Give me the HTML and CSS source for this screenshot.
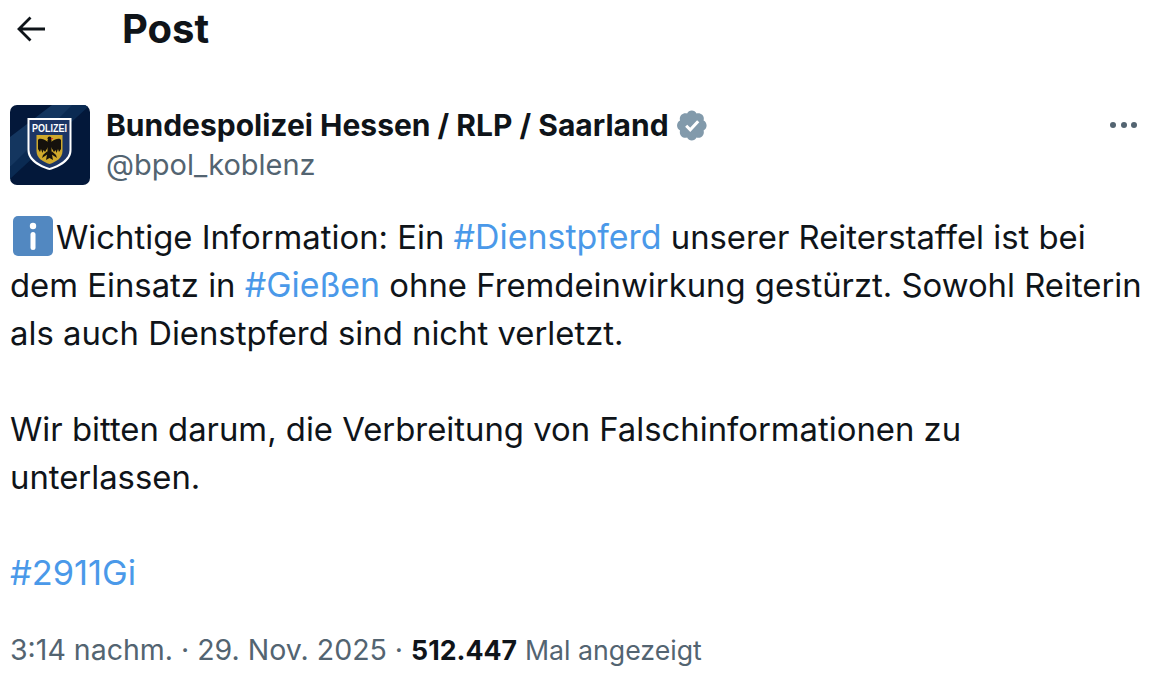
FILE: index.html
```html
<!DOCTYPE html>
<html lang="de">
<head>
<meta charset="utf-8">
<title>Post</title>
<link rel="stylesheet" href="styles.css">
</head>
<body>
<main class="page">
  <header class="topbar">
    <svg class="back" viewBox="0 0 32 32" width="32" height="32"><path d="M30 16H3.500M15.500 4.500 4 16 15.500 27.500" fill="none" stroke="#0f1419" stroke-width="2.800"/></svg>
    <h1 class="title">Post</h1>
  </header>
  <section class="author">
    <svg class="avatar" viewBox="0 0 80 80" width="80" height="80">
      <defs><clipPath id="clip"><rect width="80" height="80" rx="7"/></clipPath></defs>
      <g clip-path="url(#clip)">
        <rect width="80" height="80" fill="#03183a"/>
        <path d="M0 32 42 0H80L0 62Z" fill="#14365f"/>
        <path d="M62 0h18L0 74V62Z" fill="#0a2a52"/>
        <path d="M17.500 13H61.500V45C61.500 56 50 62 39.500 65 29 62 17.500 56 17.500 45Z" fill="#fff"/>
        <path d="M19.500 15H59.500V45C59.500 54 49 60 39.500 63 30 60 19.500 54 19.500 45Z" fill="#1c3565"/>
        <text class="badge" x="39.500" y="27" text-anchor="middle" textLength="35" lengthAdjust="spacingAndGlyphs">POLIZEI</text>
        <path d="M26.500 30H52.500V46C52.500 53 46 57 39.500 59 33 57 26.500 53 26.500 46Z" fill="#cfa92c"/>
        <g fill="#15110c">
          <circle cx="39.500" cy="33.500" r="2"/>
          <rect x="37.500" y="35" width="4" height="13"/>
          <path d="M38 37C33 33 29 33 28 35V44L30 47 31 44 32.500 48 33.500 45 35 47 38 42Z"/>
          <path d="M41 37C46 33 50 33 51 35V44L49 47 48 44 46.500 48 45.500 45 44 47 41 42Z"/>
          <path d="M37.500 47 36 55 39.500 53 43 55 41.500 47Z"/>
          <path d="M37.500 46 33 50 32 53 35 51 38 49ZM41.500 46 46 50 47 53 44 51 41 49Z"/>
        </g>
        <path d="M41 33h2.500L41 35Z" fill="#c8262a"/>
      </g>
    </svg>
    <div class="names">
      <div class="name-row">
        <span class="name">Bundespolizei Hessen / RLP / Saarland</span>
        <svg class="verified" viewBox="0 0 22 22" width="33" height="33"><path d="M20.400 11c0-1.400-.8-2.700-2-3.300.4-1.300.1-2.800-.9-3.800s-2.400-1.300-3.800-.9C13.100 1.800 11.900 1 10.500 1S8 1.800 7.400 3C6 2.600 4.600 2.900 3.600 3.900s-1.300 2.500-.9 3.800c-1.200.6-2 1.900-2 3.300s.8 2.700 2 3.300c-.4 1.300-.1 2.800.9 3.800s2.400 1.300 3.800.9c.6 1.200 1.800 2 3.100 2s2.600-.8 3.200-2c1.400.4 2.800.1 3.800-.9s1.300-2.500.9-3.800c1.200-.6 2-1.900 2-3.300Z" fill="#829aab"/><path d="m6.800 11.200 2.700 2.700 5.300-5.800" fill="none" stroke="#fff" stroke-width="2"/></svg>
      </div>
      <div class="handle">@bpol_koblenz</div>
    </div>
    <div class="more"><i class="dot"></i><i class="dot"></i><i class="dot"></i></div>
  </section>
  <article class="body">
    <p class="para"><svg class="info" viewBox="0 0 40 40" width="40" height="40"><rect width="40" height="40" rx="5" fill="#5288c1"/><circle cx="20" cy="10" r="3.200" fill="#fff"/><rect x="17.500" y="16" width="5" height="18" rx="2.500" fill="#fff"/></svg>Wichtige Information: Ein <a class="tag">#Dienstpferd</a> unserer Reiterstaffel ist bei<br>dem Einsatz in <a class="tag">#Gießen</a> ohne Fremdeinwirkung gestürzt. Sowohl Reiterin<br>als auch Dienstpferd sind nicht verletzt.</p>
    <p class="para">Wir bitten darum, die Verbreitung von Falschinformationen zu<br>unterlassen.</p>
    <p class="para"><a class="tag tag-code">#2911Gi</a></p>
  </article>
  <footer class="meta">3:14 nachm. · 29. Nov. 2025 · <strong class="views">512.447</strong> <span class="label">Mal angezeigt</span></footer>
</main>
</body>
</html>
```

FILE: styles.css
```css
html, body {
  margin: 0;
  background: #fff;
}
.page {
  font-family: Inter, "Liberation Sans", sans-serif;
  color: #0f1419;
  padding: 0 10px;
  height: 682px;
  box-sizing: border-box;
  overflow: hidden;
}
.topbar {
  display: flex;
  align-items: center;
  height: 57px;
  gap: 75px;
  padding-left: 5px;
}
.back {
  margin-top: 1px;
}
.title {
  margin: 0;
  font-size: 40px;
  font-weight: 700;
}
.author {
  display: flex;
  align-items: flex-start;
  margin-top: 48px;
  gap: 16px;
}
.avatar {
  flex: none;
}
.names {
  flex: 1;
}
.name-row {
  display: flex;
  align-items: center;
  height: 40px;
  gap: 7px;
}
.name {
  font-size: 30px;
  font-weight: 700;
}
.handle {
  font-size: 29px;
  color: #536471;
  line-height: 40px;
}
.more {
  display: flex;
  gap: 4.500px;
  margin: 17px 19px 0 0;
}
.dot {
  width: 6px;
  height: 6px;
  border-radius: 50%;
  background: #536471;
}
.body {
  margin-top: 28px;
}
.para {
  margin: 0 0 48px;
  font-size: 32.850px;
  line-height: 48px;
}
.info {
  vertical-align: -7px;
  margin: 0 3px 0 3px;
}
.tag {
  color: #4a99e9;
  font-size: 33.900px;
}
.tag-code {
  font-size: 34.400px;
}
.meta {
  margin-top: -15px;
  font-size: 28.500px;
  line-height: 40px;
  color: #536471;
}
.views {
  color: #0f1419;
  font-weight: 700;
  font-size: 26.700px;
}
.label {
  font-size: 26.700px;
}
.badge {
  font: 700 11.500px "Liberation Sans", sans-serif;
  fill: #fff;
}
```
